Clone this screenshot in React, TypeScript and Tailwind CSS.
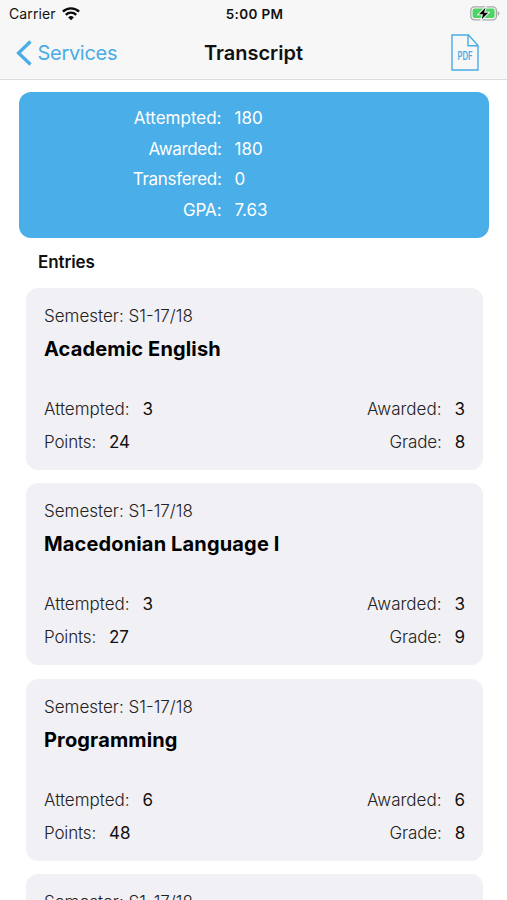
const summary = [
  { label: "Attempted:", value: "180", spacing: "" },
  { label: "Awarded:", value: "180", spacing: "tracking-[-0.35px]" },
  { label: "Transfered:", value: "0", spacing: "tracking-[-0.300px]" },
  { label: "GPA:", value: "7.63", spacing: "tracking-[-0.1px]" },
]

const entries = [
  { semester: "S1-17/18", title: "Academic English", attempted: 3, awarded: 3, points: 24, grade: 8 },
  { semester: "S1-17/18", title: "Macedonian Language I", attempted: 3, awarded: 3, points: 27, grade: 9 },
  { semester: "S1-17/18", title: "Programming", attempted: 6, awarded: 6, points: 48, grade: 8 },
]

function WifiIcon() {
  return (
    <svg width="18" height="14" viewBox="0 0 18 14" fill="none" stroke="#0a0a0a" strokeWidth="2.400">
      <path d="M0.9 4.700a11.600 11.600 0 0 1 16.200 0" />
      <path d="M3.800 7.800a7.400 7.400 0 0 1 10.400 0" />
      <path d="M9 13.200 6.200 10.400a4 4 0 0 1 5.600 0Z" fill="#0a0a0a" stroke="none" />
    </svg>
  )
}

function BatteryIcon() {
  return (
    <svg width="30" height="16" viewBox="0 0 30 16" fill="none">
      <rect x="0.8" y="0.800" width="25.600" height="13" rx="3.600" stroke="#a9a9ab" strokeWidth="1.300" />
      <path d="M27.700 5.100v4.600c1-.4 1.700-1.300 1.700-2.300s-.7-1.900-1.700-2.300Z" fill="#a9a9ab" />
      <rect x="2.600" y="2.600" width="22" height="9.400" rx="2" fill="#4cd564" />
      <path
        d="M15.400 1.700 9 8.300h4l-1.300 5L18.200 6.700h-4.100Z"
        fill="#000"
        stroke="#f7f7f7"
        strokeWidth="2"
        paintOrder="stroke"
      />
    </svg>
  )
}

function PdfIcon() {
  return (
    <svg width="28" height="37" viewBox="0 0 28 37" fill="none" stroke="#4aace6" strokeWidth="1.400">
      <path d="M1 1h16.500L27 11.500V36H1Z" />
      <path d="M17 1v10.800h10" />
      <text
        x="14"
        y="26.300"
        textAnchor="middle"
        textLength="15"
        lengthAdjust="spacingAndGlyphs"
        fill="#4aace6"
        stroke="none"
        className="font-['Inter',sans-serif] text-[11.500px] font-semibold"
      >
        PDF
      </text>
    </svg>
  )
}

function Field({ label, value }: { label: string; value: number }) {
  return (
    <div className="flex gap-[13px]">
      <span className="font-light text-[#222]">{label}</span>
      <span className="text-[#111]">{value}</span>
    </div>
  )
}

export default function App() {
  return (
    <div className="h-[900px] w-[507px] overflow-hidden bg-white font-['Inter',sans-serif] text-[17px] leading-6">
      {/* Navigation bar */}
      <header className="h-[80px] border-b border-[#dcdcdc] bg-[#f7f7f7]">
        <div className="grid h-[27px] grid-cols-3 items-center pl-[9px] pr-[7px] text-[13.500px] text-[#111]">
          <div className="flex items-center gap-[6px]">
            <span className="text-[14px] tracking-[0.100px]">Carrier</span>
            <WifiIcon />
          </div>
          <div className="text-center font-semibold tracking-[0.350px]">5:00 PM</div>
          <div className="flex justify-end">
            <BatteryIcon />
          </div>
        </div>
        <div className="grid h-[51px] grid-cols-3 items-center pl-4 pr-7">
          <div className="flex items-center gap-[5.500px] text-[20px] tracking-[-0.300px] text-[#4aace6]">
            <svg width="16" height="26" viewBox="0 0 16 26" fill="none" stroke="currentColor" strokeWidth="3.200">
              <path d="M14.500 1.500 2.500 13l12 11.500" />
            </svg>
            Services
          </div>
          <div className="pl-3 text-center text-[20px] font-semibold text-[#111]">Transcript</div>
          <div className="flex justify-end">
            <PdfIcon />
          </div>
        </div>
      </header>

      {/* Totals */}
      <section className="ml-[19px] mt-[11.500px] h-[146px] w-[470px] rounded-[12px] bg-[#4aaee8] pt-[14.500px] text-white">
        {summary.map(({ label, value, spacing }) => (
          <div key={label} className="flex h-[30.500px] gap-[13px]">
            <span className={`w-[202.500px] text-right ${spacing}`}>{label}</span>
            <span>{value}</span>
          </div>
        ))}
      </section>

      <h2 className="ml-[38px] mt-[12px] text-[17px] font-semibold tracking-[-0.100px] text-[#111]">Entries</h2>

      <section className="mt-[14px] flex flex-col gap-[13.500px] pl-[26px] pr-6">
        {entries.map((entry) => (
          <article key={entry.title} className="h-[182px] shrink-0 rounded-[12px] bg-[#f1f0f5] px-[18px] py-4">
            <p className="font-light text-[#222]">Semester: {entry.semester}</p>
            <h3 className="mt-[7px] text-[20px] font-bold leading-7 tracking-[0.150px] text-black">{entry.title}</h3>
            <div className="mt-[34px] flex justify-between">
              <Field label="Attempted:" value={entry.attempted} />
              <Field label="Awarded:" value={entry.awarded} />
            </div>
            <div className="mt-[9px] flex justify-between tracking-[-0.150px]">
              <Field label="Points:" value={entry.points} />
              <Field label="Grade:" value={entry.grade} />
            </div>
          </article>
        ))}
        {/* Next entry peeking in at the fold */}
        <article className="h-[182px] shrink-0 rounded-[12px] bg-[#f1f0f5] px-[18px] py-4">
          <p className="font-light text-[#222]">Semester: S1-17/18</p>
        </article>
      </section>
    </div>
  )
}
